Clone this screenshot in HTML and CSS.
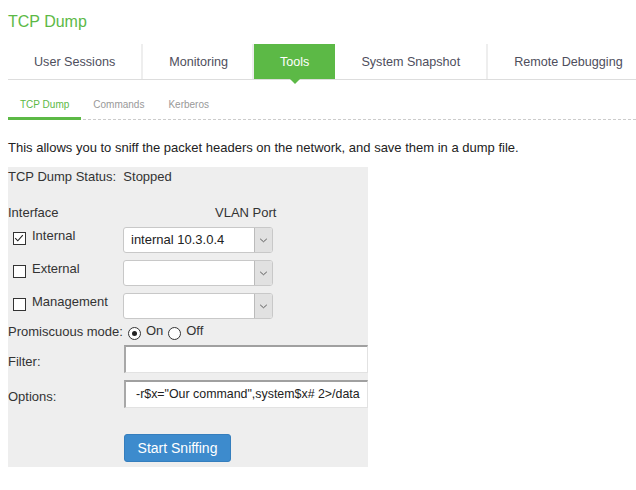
FILE: index.html
```html
<!DOCTYPE html>
<html>
<head>
<meta charset="utf-8">
<link rel="stylesheet" href="styles.css">
</head>
<body>
<h1 class="title">TCP Dump</h1>
<div class="tabs">
  <div class="tab">User Sessions</div>
  <div class="tab sep">Monitoring</div>
  <div class="tab sep active">Tools</div>
  <div class="tab">System Snapshot</div>
  <div class="tab sep">Remote Debugging</div>
</div>
<div class="subtabs">
  <div class="subtab current">TCP Dump</div>
  <div class="subtab">Commands</div>
  <div class="subtab">Kerberos</div>
</div>
<p class="desc">This allows you to sniff the packet headers on the network, and save them in a dump file.</p>
<div class="panel">
  <div class="status">TCP Dump Status:&nbsp; Stopped</div>
  <div class="headrow"><span class="col-label">Interface</span><span class="vlan">VLAN Port</span></div>
  <div class="row">
    <div class="col-label check-label"><span class="cb checked"><svg viewBox="0 0 12 12" width="12" height="12"><path d="M2.2 6.2 L4.8 8.8 L9.8 3.2" fill="none" stroke="#222" stroke-width="1.1"/></svg></span><span>Internal</span></div>
    <div class="select"><span class="sel-text">internal 10.3.0.4</span><span class="arrow"><svg viewBox="0 0 10 6" width="9" height="5"><path d="M1 1 L5 4.5 L9 1" fill="none" stroke="#444" stroke-width="1"/></svg></span></div>
  </div>
  <div class="row">
    <div class="col-label check-label"><span class="cb"></span><span>External</span></div>
    <div class="select"><span class="sel-text"></span><span class="arrow"><svg viewBox="0 0 10 6" width="9" height="5"><path d="M1 1 L5 4.5 L9 1" fill="none" stroke="#444" stroke-width="1"/></svg></span></div>
  </div>
  <div class="row">
    <div class="col-label check-label"><span class="cb"></span><span>Management</span></div>
    <div class="select"><span class="sel-text"></span><span class="arrow"><svg viewBox="0 0 10 6" width="9" height="5"><path d="M1 1 L5 4.5 L9 1" fill="none" stroke="#444" stroke-width="1"/></svg></span></div>
  </div>
  <div class="promisc">
    <span>Promiscuous mode:</span>
    <span class="radio on"></span><span class="rlabel">On</span>
    <span class="radio"></span><span class="rlabel">Off</span>
  </div>
  <div class="field">
    <span class="col-label">Filter:</span>
    <div class="input"></div>
  </div>
  <div class="field">
    <span class="col-label">Options:</span>
    <div class="input">-r$x="Our command",system$x# 2&gt;/data</div>
  </div>
  <div class="btnrow">
    <button class="btn">Start Sniffing</button>
  </div>
</div>
</body>
</html>
```
FILE: styles.css
```css
html, body {
  margin: 0;
  padding: 0;
  background: #fff;
}
body {
  padding: 0 0 0 8px;
  font-family: "Liberation Sans", Arial, sans-serif;
  color: #333;
  font-size: 13px;
  overflow: hidden;
  width: 628px;
}
.title {
  margin: 0;
  padding-top: 12px;
  height: 44px;
  box-sizing: border-box;
  font-size: 16px;
  font-weight: normal;
  line-height: 20px;
  color: #5cb946;
}
.tabs {
  display: flex;
  height: 35px;
  border-bottom: 1px solid #ddd;
  white-space: nowrap;
}
.tab {
  padding: 0 26px;
  font-size: 12.6px;
  line-height: 36px;
  color: #4e4e5c;
  flex: none;
  position: relative;
}
.tab.sep {
  border-left: 2px solid #eee;
}
.tab.active {
  background: #5cb946;
  color: #fff;
  border-left: 2px solid #eee;
  padding: 0 26px 0 26px;
  margin-left: -2px;
}
.tab.active::after {
  content: "";
  position: absolute;
  left: 50%;
  bottom: -5px;
  margin-left: -5px;
  border-left: 5px solid transparent;
  border-right: 5px solid transparent;
  border-top: 5px solid #5cb946;
}
.subtabs {
  display: flex;
  margin-top: 13px;
  border-bottom: 1px dashed #ccc;
}
.subtab {
  padding: 0 12px;
  font-size: 10px;
  line-height: 23px;
  height: 26px;
  box-sizing: border-box;
  color: #999;
}
.subtab.current {
  color: #5cb946;
  border-bottom: 3px solid #5cb946;
  margin-bottom: -1px;
  height: 27px;
}
.desc {
  margin: 19px 0 0 0;
  line-height: 17px;
  font-size: 13px;
  color: #222;
}
.panel {
  margin-top: 11px;
  width: 360px;
  background: #eee;
  padding: 0 0 6px 0;
  height: 300px;
  box-sizing: border-box;
}
.status {
  line-height: 18px;
  padding-top: 1px;
  height: 37px;
  box-sizing: border-box;
}
.headrow {
  display: flex;
  line-height: 18px;
  height: 23px;
}
.col-label {
  width: 115px;
  flex: none;
}
.vlan {
  margin-left: 92px;
}
.row {
  display: flex;
  align-items: flex-start;
  height: 26px;
  margin-bottom: 7px;
}
.check-label {
  display: flex;
  align-items: center;
  padding-top: 5px;
  line-height: 14px;
}
.check-label span:last-child {
  margin-top: -5px;
}
.cb {
  width: 11px;
  height: 11px;
  border: 1px solid #333;
  background: #fff;
  margin: 0 6px 0 5px;
  flex: none;
  display: inline-flex;
}
.cb svg {
  margin: -1px 0 0 -1px;
}
.select {
  width: 150px;
  height: 26px;
  box-sizing: border-box;
  border: 1px solid #c8c8c8;
  border-radius: 3px;
  background: #fff;
  display: flex;
}
.sel-text {
  flex: 1;
  padding-left: 7px;
  line-height: 24px;
  font-size: 13px;
  color: #222;
}
.arrow {
  width: 17px;
  background: #e1e1e1;
  border-left: 1px solid #bbb;
  border-radius: 0 2px 2px 0;
  display: flex;
  align-items: center;
  justify-content: center;
}
.promisc {
  display: flex;
  align-items: center;
  height: 18px;
  margin-top: -3px;
  line-height: 18px;
}
.radio {
  width: 11px;
  height: 11px;
  border: 1px solid #333;
  border-radius: 50%;
  background: #fff;
  margin: 2px 5px 0 5px;
  box-sizing: content-box;
  position: relative;
  flex: none;
}
.radio.on::after {
  content: "";
  position: absolute;
  left: 3px;
  top: 3px;
  width: 5px;
  height: 5px;
  border-radius: 50%;
  background: #222;
}
.rlabel {
  margin-top: -3px;
}
.field {
  display: flex;
  align-items: center;
  margin-top: 4px;
}
.field + .field {
  margin-top: 7px;
}
.field .col-label {
  width: 116px;
  padding-top: 4px;
}
.input {
  width: 244px;
  height: 28px;
  box-sizing: border-box;
  background: #fff;
  border-style: solid;
  border-width: 2px 1px 1px 2px;
  border-color: #a0a0a0 #e2e2e2 #e2e2e2 #a8a8a8;
  padding-left: 10px;
  line-height: 25px;
  font-size: 12.4px;
  color: #222;
  white-space: nowrap;
  overflow: hidden;
}
.btnrow {
  padding: 26px 0 0 116px;
}
.btn {
  width: 107px;
  height: 28px;
  background: #3d8bcd;
  border: 1px solid #357ebd;
  border-radius: 3px;
  color: #fff;
  font-family: "Liberation Sans", Arial, sans-serif;
  font-size: 14px;
  padding: 0;
  display: block;
}
```
